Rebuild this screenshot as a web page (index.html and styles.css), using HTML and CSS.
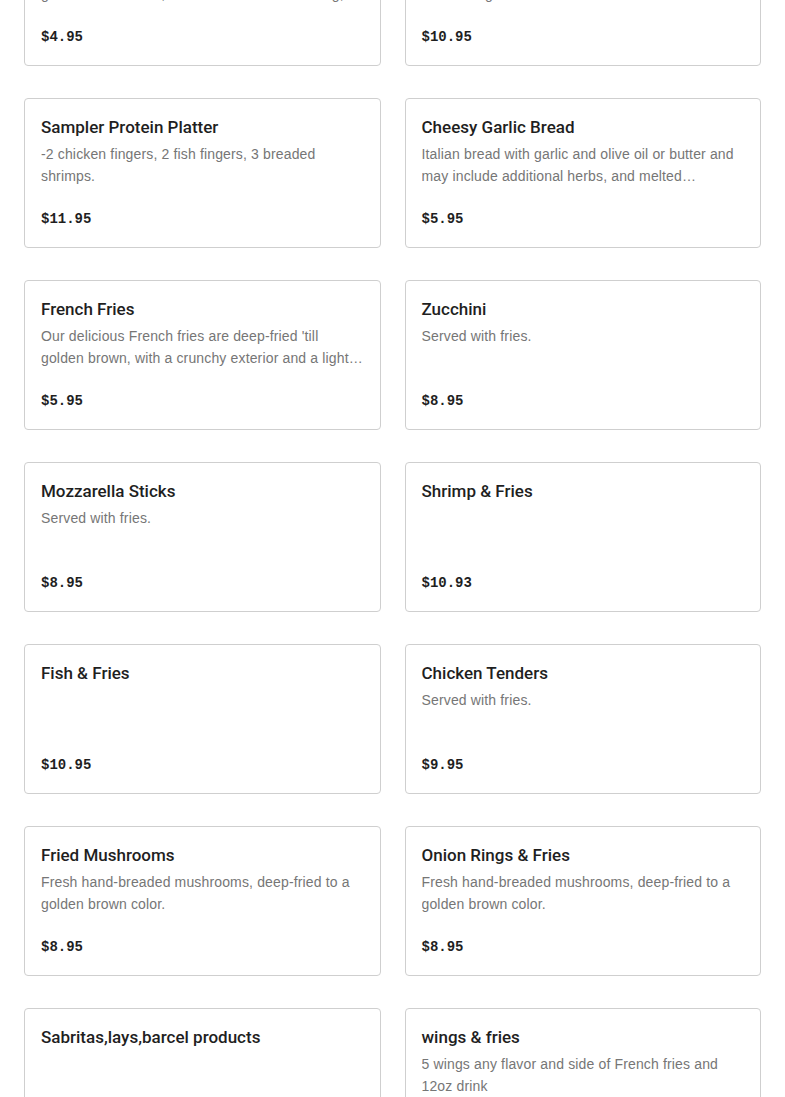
FILE: index.html
```html
<!DOCTYPE html>
<html lang="en">
<head>
<meta charset="utf-8">
<title>Menu</title>
<link rel="stylesheet" href="styles.css">
</head>
<body>
<main class="menu">
  <div class="grid">
    <article class="card">
      <h3 class="title">Onion Rings</h3>
      <p class="desc">Fresh hand-breaded onion rings, deep-fried to a golden brown color, served with ranch dressing,</p>
      <div class="price">$4.95</div>
    </article>
    <article class="card">
      <h3 class="title">Boneless Wings</h3>
      <p class="desc">Boneless chicken bites tossed in your choice of sauce wings.</p>
      <div class="price">$10.95</div>
    </article>
    <article class="card">
      <h3 class="title">Sampler Protein Platter</h3>
      <p class="desc">-2 chicken fingers, 2 fish fingers, 3 breaded shrimps.</p>
      <div class="price">$11.95</div>
    </article>
    <article class="card">
      <h3 class="title">Cheesy Garlic Bread</h3>
      <p class="desc">Italian bread with garlic and olive oil or butter and may include additional herbs, and melted mozzarella cheese on top.</p>
      <div class="price">$5.95</div>
    </article>
    <article class="card">
      <h3 class="title">French Fries</h3>
      <p class="desc">Our delicious French fries are deep-fried 'till golden brown, with a crunchy exterior and a light fluffy interior.</p>
      <div class="price">$5.95</div>
    </article>
    <article class="card">
      <h3 class="title">Zucchini</h3>
      <p class="desc">Served with fries.</p>
      <div class="price">$8.95</div>
    </article>
    <article class="card">
      <h3 class="title">Mozzarella Sticks</h3>
      <p class="desc">Served with fries.</p>
      <div class="price">$8.95</div>
    </article>
    <article class="card">
      <h3 class="title">Shrimp &amp; Fries</h3>
      <p class="desc"></p>
      <div class="price">$10.93</div>
    </article>
    <article class="card">
      <h3 class="title">Fish &amp; Fries</h3>
      <p class="desc"></p>
      <div class="price">$10.95</div>
    </article>
    <article class="card">
      <h3 class="title">Chicken Tenders</h3>
      <p class="desc">Served with fries.</p>
      <div class="price">$9.95</div>
    </article>
    <article class="card">
      <h3 class="title">Fried Mushrooms</h3>
      <p class="desc">Fresh hand-breaded mushrooms, deep-fried to a golden brown color.</p>
      <div class="price">$8.95</div>
    </article>
    <article class="card">
      <h3 class="title">Onion Rings &amp; Fries</h3>
      <p class="desc">Fresh hand-breaded mushrooms, deep-fried to a golden brown color.</p>
      <div class="price">$8.95</div>
    </article>
    <article class="card">
      <h3 class="title">Sabritas,lays,barcel products</h3>
      <p class="desc"></p>
      <div class="price">$1.50</div>
    </article>
    <article class="card">
      <h3 class="title">wings &amp; fries</h3>
      <p class="desc">5 wings any flavor and side of French fries and 12oz drink</p>
      <div class="price">$12.95</div>
    </article>
  </div>
</main>
</body>
</html>
```
FILE: styles.css
```css
html, body {
  margin: 0;
  padding: 0;
  background: #ffffff;
}

body {
  font-family: "Liberation Sans", Arial, sans-serif;
  color: #1f1f1f;
  overflow: hidden;
}

.menu {
  padding: 0 24px;
  margin-top: -84px;
}

.grid {
  display: grid;
  grid-template-columns: 1fr 1fr;
  column-gap: 24px;
  row-gap: 32px;
}

.card {
  border: 1px solid #cfcfcf;
  border-radius: 4px;
  padding: 16px 16px 16px 16px;
  display: flex;
  flex-direction: column;
  height: 150px;
  box-sizing: border-box;
}

.title {
  margin: 0;
  font-family: Roboto, "Liberation Sans", sans-serif;
  font-size: 17px;
  line-height: 24px;
  font-weight: 500;
  color: #1f1f1f;
}

.desc {
  margin: 4px 0 0 0;
  font-size: 14px;
  letter-spacing: 0.15px;
  line-height: 22px;
  color: #767676;
  height: 44px;
  display: -webkit-box;
  -webkit-line-clamp: 2;
  -webkit-box-orient: vertical;
  overflow: hidden;
}

.price {
  margin-top: 23px;
  font-family: "Liberation Mono", "DejaVu Sans Mono", monospace;
  font-weight: 700;
  font-size: 14px;
  line-height: 24px;
  color: #1f1f1f;
}
```
